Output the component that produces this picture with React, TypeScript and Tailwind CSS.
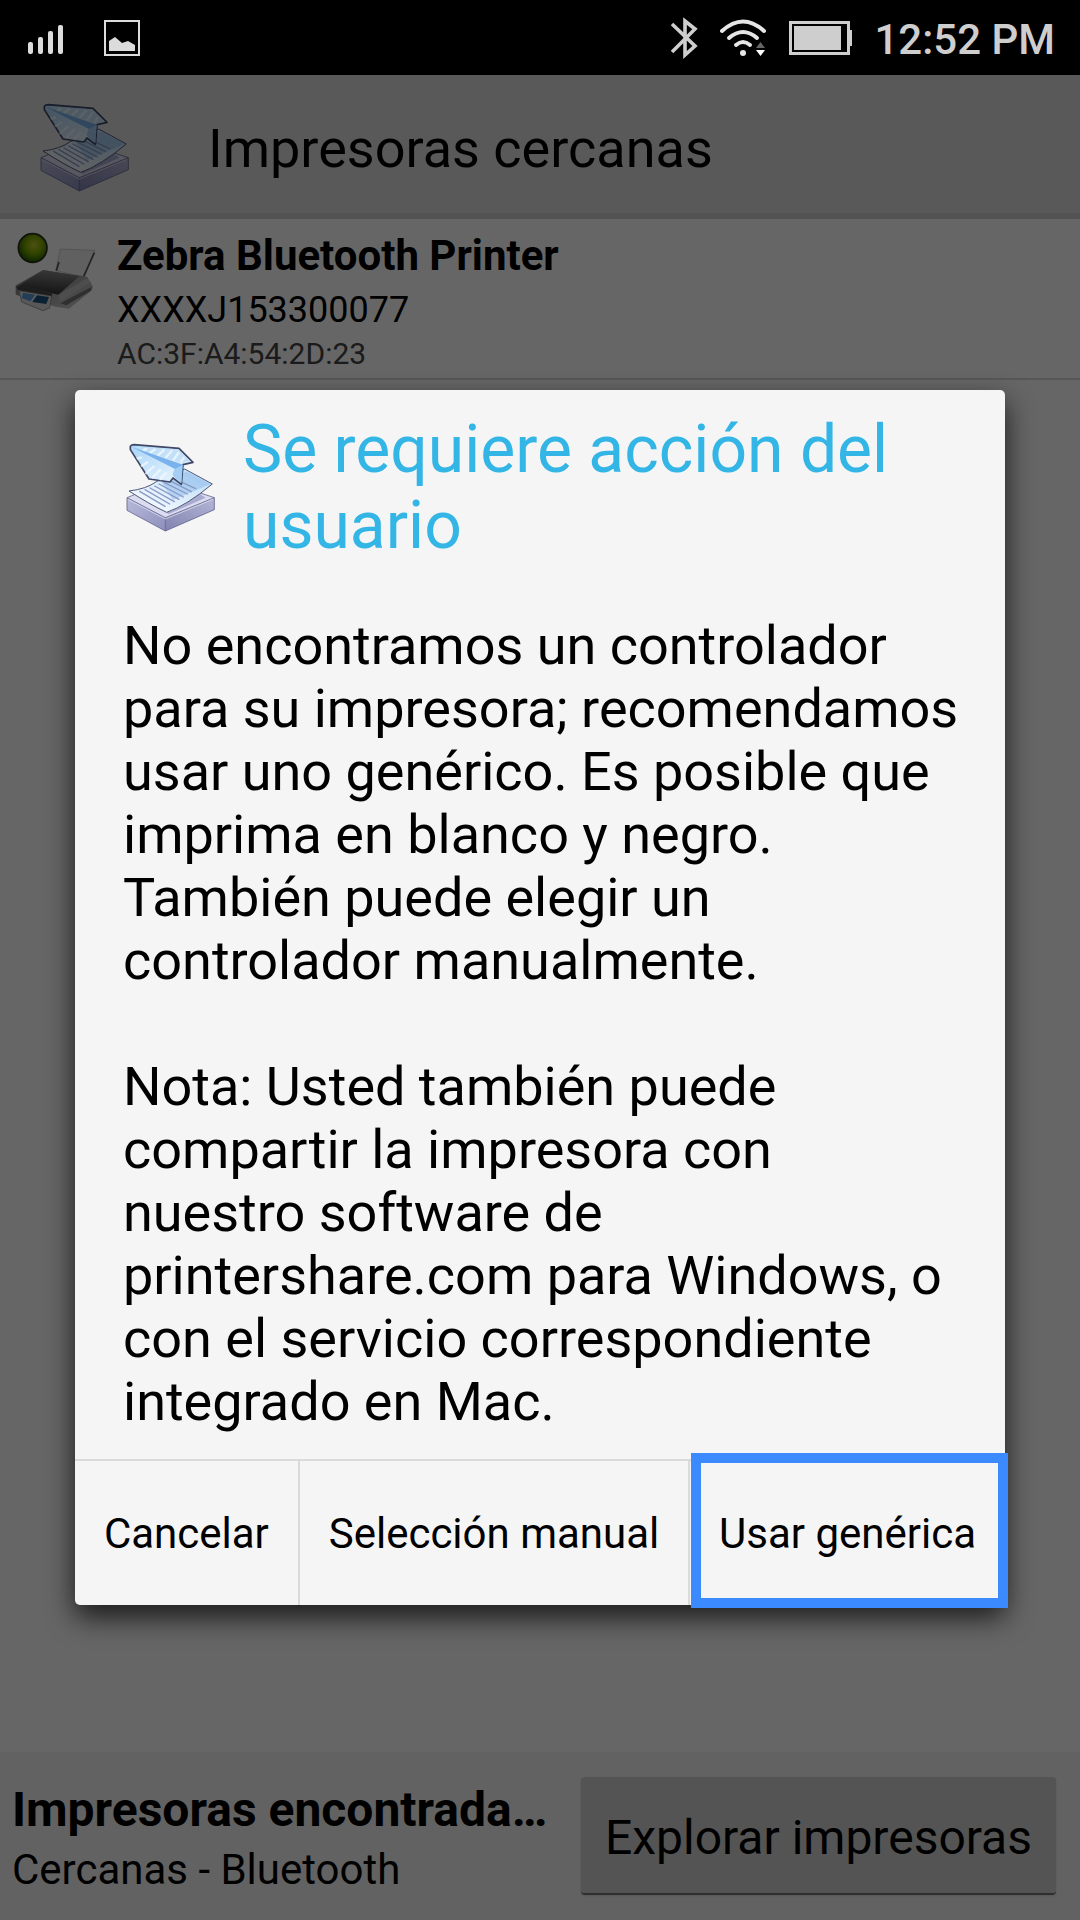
import type { ReactNode } from "react";

const StatusBar = () => (
  <div className="flex h-[75px] shrink-0 items-center justify-between bg-black px-7 text-[#cecece]">
    <div className="flex items-center gap-[41px]">
      <svg className="h-[36px] w-[35px]" viewBox="0 0 35 36" fill="#dcdcdc" aria-label="Señal">
        <rect x="0" y="22" width="5" height="12" rx="2" />
        <rect x="10" y="17" width="5" height="17" rx="2" />
        <rect x="20" y="11" width="5" height="23" rx="2" />
        <rect x="30" y="5" width="5" height="29" rx="2" />
      </svg>
      <svg className="h-[36px] w-[36px]" viewBox="0 0 36 36" aria-label="Imagen">
        <rect x="1" y="1" width="34" height="34" fill="none" stroke="#dcdcdc" strokeWidth="2" />
        <path d="M5 21 L11 17 L18 23 L24 21 L31 25 V31 H5Z" fill="#dcdcdc" />
      </svg>
    </div>
    <div className="flex items-center">
      <svg className="h-[44px] w-[28px]" viewBox="0 0 28 44" fill="none" stroke="#cecece" strokeWidth="3.6" aria-label="Bluetooth">
        <path d="M2 8 L25 30 L15 39 V5 L25 13 L2 36" />
      </svg>
      <svg className="ml-[22px] h-[38px] w-[46px]" viewBox="0 0 46 38" fill="none" strokeWidth="4" strokeLinecap="round" stroke="#e6e6e6" aria-label="Wi-Fi">
        <path d="M2 12 Q23 -7 44 12" />
        <path d="M9 19 Q23 7 37 19" />
        <path d="M16 26 Q23 20 30 26" />
        <circle cx="23" cy="34" r="3" fill="#e6e6e6" stroke="none" />
        <path d="M36 29 H45 L40.5 23Z" fill="#666" stroke="none" />
        <path d="M36 31 H45 L40.5 37Z" fill="#fff" stroke="none" />
      </svg>
      <svg className="ml-[23px] h-[34px] w-[64px]" viewBox="0 0 64 34" aria-label="Batería">
        <rect x="1.5" y="1.5" width="58" height="31" fill="none" stroke="#cecece" strokeWidth="3" />
        <rect x="5" y="5" width="47" height="24" fill="#cecece" />
        <path d="M60 9 H63 V25 H60Z" fill="#cecece" />
      </svg>
      <span className="-mr-[3px] ml-[21px] pt-[3px] text-[42px] font-medium leading-[49px]">12:52 PM</span>
    </div>
  </div>
);

const AppLogo = () => (
  <svg className="h-24 w-24 shrink-0" viewBox="70 55 288 288" strokeLinejoin="round" aria-hidden="true">
    <defs>
      <linearGradient id="trayLeft" x1="0" y1="0" x2="1" y2="1">
        <stop offset="0" stopColor="#b9bbdc" />
        <stop offset="1" stopColor="#8d90bb" />
      </linearGradient>
      <linearGradient id="trayRight" x1="0" y1="1" x2="1" y2="0">
        <stop offset="0" stopColor="#8184b0" />
        <stop offset="1" stopColor="#b4b5d6" />
      </linearGradient>
      <linearGradient id="sheet" x1="0" y1="1" x2="1" y2="0">
        <stop offset="0" stopColor="#ffffff" />
        <stop offset="0.5" stopColor="#dcecfb" />
        <stop offset="1" stopColor="#b5d8f8" />
      </linearGradient>
      <linearGradient id="wing" x1="0" y1="0" x2="1" y2="1">
        <stop offset="0" stopColor="#a9d4f7" />
        <stop offset="1" stopColor="#f2f9ff" />
      </linearGradient>
    </defs>
    {/* tray */}
    <path d="M82 228 L197 288 V328 L82 266Z" fill="url(#trayLeft)" />
    <path d="M197 288 L344 228 V264 L197 328Z" fill="url(#trayRight)" />
    <path d="M82 228 L200 180 L344 228 L197 288Z" fill="#dcdcf0" />
    <path d="M201 272 Q240 262 300 216 L318 228 L206 278Z" fill="#a9abd0" />
    <path d="M82 228 L200 180 L344 228 V264 L197 328 L82 266Z M82 228 L197 288 L344 228 M197 288 V328" fill="none" stroke="#62658f" strokeWidth="2.5" />
    <path d="M86 234 L197 292 L340 233" fill="none" stroke="#e8e8f8" strokeWidth="2" />
    {/* printed sheet */}
    <path d="M88 208 Q140 202 170 180 L255 142 L338 187 Q260 252 201 272 Q150 248 88 208Z" fill="url(#sheet)" stroke="#4e5878" strokeWidth="3" />
    <path d="M182 176 L262 150 L332 187 L270 214 L220 235Z" fill="#83b3e6" opacity="0.45" />
    <g stroke="#8799c6" strokeWidth="4" strokeLinecap="round">
      <path d="M120 209 L196 254 M136 204 L210 247 M151 199 L224 240 M165 193 L238 233 M178 187 L251 226 M193 182 L263 217 M210 177 L275 210 M228 173 L288 201" />
    </g>
    {/* paper plane */}
    <path d="M92 74 Q96 69 103 69 L238 80 L280 122 L250 129 L245 188 L220 169 L211 181 L148 172 L92 84Z" fill="url(#wing)" stroke="#3f4866" strokeWidth="5" />
    <path d="M105 75 L235 83 L272 119 L244 124Z" fill="#c4e0f8" />
    <g stroke="#f3faff" strokeWidth="7" opacity="0.75">
      <path d="M142 80 L130 87 M168 82 L150 94 M194 84 L174 102 M218 86 L197 109 M238 91 L220 117 M254 106 L242 122" />
      <path d="M127 107 L111 111 M145 121 L124 134 M164 133 L137 157 M183 143 L157 169 M201 152 L180 174" />
    </g>
    <path d="M98 77 L250 129 L245 184 L219 160 L226 142Z" fill="#79b2ec" />
    <path d="M226 142 L219 160 L245 184 L248 131Z" fill="#a5cef4" />
  </svg>
);

const PrinterIcon = () => (
  <svg className="h-[85px] w-[85px] shrink-0" viewBox="40 95 255 255" strokeLinejoin="round" aria-hidden="true">
    <defs>
      <radialGradient id="led" cx="0.55" cy="0.4" r="0.6">
        <stop offset="0" stopColor="#c0cc30" />
        <stop offset="0.5" stopColor="#7ea800" />
        <stop offset="1" stopColor="#1e5c00" />
      </radialGradient>
      <linearGradient id="lid" x1="0.6" y1="0" x2="0.4" y2="1">
        <stop offset="0" stopColor="#8d8d8d" />
        <stop offset="1" stopColor="#303030" />
      </linearGradient>
      <linearGradient id="body" x1="0" y1="0" x2="1" y2="1">
        <stop offset="0" stopColor="#767676" />
        <stop offset="1" stopColor="#d2d2d2" />
      </linearGradient>
    </defs>
    <path d="M182 149 L286 153 L250 232 L168 214Z" fill="#f0f0f0" stroke="#bbb" strokeWidth="2" />
    <path d="M284 160 L252 232 M178 188 L170 214" stroke="#555" strokeWidth="5" />
    <path d="M48 264 Q46 258 56 254 L130 212 L262 232 L280 262 Q278 272 270 278 L208 328 L168 322 L48 286Z" fill="url(#body)" />
    <path d="M60 258 L132 213 L240 230 L176 286Z" fill="url(#lid)" />
    <path d="M50 262 L62 257 L158 282 L156 292 L54 272Z" fill="#4a4a4a" />
    <path d="M176 288 L260 238 L274 248 L184 306Z" fill="#c2c2c2" />
    <path d="M182 312 L276 262 L274 274 L200 318Z" fill="#777" />
    <path d="M58 274 L156 290 L150 326 L130 334 L66 308Z" fill="#dcdcdc" stroke="#777" strokeWidth="2" />
    <path d="M70 280 L106 286 L92 306 L66 296Z" fill="#5a9ad8" />
    <path d="M112 288 L148 293 L140 314 L98 308Z" fill="#18537d" />
    <circle cx="99" cy="146" r="43" fill="url(#led)" stroke="#283018" strokeWidth="5" />
  </svg>
);

const DialogButton = ({ children }: { children: ReactNode }) => (
  <button className="grow whitespace-nowrap border-r-2 border-[#dadada] px-7 text-[42px] leading-[49px]">{children}</button>
);

export default function App() {
  return (
    <div className="flex min-h-screen flex-col font-[Roboto,sans-serif] text-black">
      <StatusBar />

      <main className="relative flex grow flex-col bg-white">
        <header className="flex h-36 items-center gap-[75px] border-b-[6px] border-[#cfcfcf] bg-[#dedede] pl-[37px] pt-2">
          <AppLogo />
          <h1 className="text-[54px] leading-[63px]">Impresoras cercanas</h1>
        </header>

        <div className="flex gap-[19px] border-b-2 border-[#dadada] px-[13px] pb-[6px] pt-3">
          <PrinterIcon />
          <div>
            <h2 className="text-[42px] font-bold leading-[50px]">Zebra Bluetooth Printer</h2>
            <p className="pt-1 text-[36px] leading-[50px]">XXXXJ153300077</p>
            <p className="text-[30px] leading-[37px] text-[#444]">AC:3F:A4:54:2D:23</p>
          </div>
        </div>

        <footer className="mt-auto flex h-[168px] items-center bg-[#f5f5f5] pl-3 pr-6">
          <div className="min-w-0 grow pt-[6px]">
            <p className="truncate text-[48px] font-bold leading-[62px]">Impresoras encontrada…</p>
            <p className="text-[42px] leading-[58px]">Cercanas - Bluetooth</p>
          </div>
          <button className="ml-6 h-[118px] shrink-0 rounded-sm border-b-2 border-[#777] bg-[#d2d2d2] px-6 pt-[5px] text-[48px] shadow-sm">
            Explorar impresoras
          </button>
        </footer>

        {/* Modal */}
        <div className="absolute inset-0 flex items-center justify-center bg-black/60 px-[75px]">
          <div role="dialog" aria-labelledby="dialog-title" className="w-full rounded-[5px] bg-[#f5f5f5] shadow-[0_12px_28px_rgba(0,0,0,0.75)]">
            <div className="flex items-center gap-6 px-12 pt-[22px]">
              <AppLogo />
              <h2 id="dialog-title" className="text-[66px] leading-[76px] text-[#33b5e5]">
                Se requiere acción del usuario
              </h2>
            </div>
            <div className="pb-[26px] pl-12 pr-10 pt-[50px] text-[54px] leading-[63px]">
              <p>
                No encontramos un controlador para su impresora; recomendamos usar uno genérico. Es posible que
                imprima en blanco y negro. También puede elegir un controlador manualmente.
              </p>
              <p className="mt-[63px]">
                Nota: Usted también puede compartir la impresora con nuestro software de printershare.com para
                Windows, o con el servicio correspondiente integrado en Mac.
              </p>
            </div>
            <div className="flex h-[146px] border-t-2 border-[#dadada]">
              <DialogButton>Cancelar</DialogButton>
              <DialogButton>Selección manual</DialogButton>
              <button className="relative grow whitespace-nowrap px-7 text-[42px] leading-[49px]">
                Usar genérica
                <span className="absolute -bottom-[3px] -right-[3px] -top-2 left-px border-[10px] border-[#3b8aff]" />
              </button>
            </div>
          </div>
        </div>
      </main>
    </div>
  );
}
